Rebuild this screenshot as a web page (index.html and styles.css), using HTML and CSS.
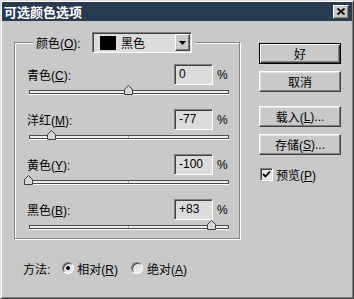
FILE: index.html
```html
<!DOCTYPE html>
<html lang="zh-CN">
<head>
<meta charset="utf-8">
<title>可选颜色选项</title>
<link rel="stylesheet" href="styles.css">
</head>
<body>
<div class="window">
  <div class="titlebar">
    <span class="title">可选颜色选项</span>
    <span class="close"><svg width="8" height="7" viewBox="0 0 8 7"><path d="M0.5 0.5 L7.5 6.5 M7.5 0.5 L0.5 6.5" stroke="#000" stroke-width="1.7" fill="none"/></svg></span>
  </div>
  <div class="content">
    <div class="main">
      <div class="group">
        <div class="group-head">
          <span class="head-label">颜色(<u>O</u>):</span>
          <div class="select sunken">
            <span class="swatch"></span>
            <span class="select-text">黑色</span>
            <span class="select-btn"><svg width="7" height="4" viewBox="0 0 7 4"><polygon points="0,0 7,0 3.5,4" fill="#000"/></svg></span>
          </div>
        </div>
        <div class="rows">
          <div class="row">
            <div class="row-top"><span class="label">青色(<u>C</u>):</span><span class="input sunken">0</span><span class="pct">%</span></div>
            <div class="slider"><div class="track"><span class="tick"></span><span class="thumb" style="left:94px"><svg width="9" height="10" viewBox="0 0 9 10"><polygon points="0.5,9.5 0.5,4.5 4.5,0.5 8.5,4.5 8.5,9.5" fill="#d6d6d6" stroke="#3c3c3c" stroke-width="1"/></svg></span></div></div>
          </div>
          <div class="row">
            <div class="row-top"><span class="label">洋红(<u>M</u>):</span><span class="input sunken">-77</span><span class="pct">%</span></div>
            <div class="slider"><div class="track"><span class="tick"></span><span class="thumb" style="left:17px"><svg width="9" height="10" viewBox="0 0 9 10"><polygon points="0.5,9.5 0.5,4.5 4.5,0.5 8.5,4.5 8.5,9.5" fill="#d6d6d6" stroke="#3c3c3c" stroke-width="1"/></svg></span></div></div>
          </div>
          <div class="row">
            <div class="row-top"><span class="label">黄色(<u>Y</u>):</span><span class="input sunken">-100</span><span class="pct">%</span></div>
            <div class="slider"><div class="track"><span class="tick"></span><span class="thumb" style="left:-6px"><svg width="9" height="10" viewBox="0 0 9 10"><polygon points="0.5,9.5 0.5,4.5 4.5,0.5 8.5,4.5 8.5,9.5" fill="#d6d6d6" stroke="#3c3c3c" stroke-width="1"/></svg></span></div></div>
          </div>
          <div class="row">
            <div class="row-top"><span class="label">黑色(<u>B</u>):</span><span class="input sunken">+83</span><span class="pct">%</span></div>
            <div class="slider"><div class="track"><span class="tick"></span><span class="thumb" style="left:177px"><svg width="9" height="10" viewBox="0 0 9 10"><polygon points="0.5,9.5 0.5,4.5 4.5,0.5 8.5,4.5 8.5,9.5" fill="#d6d6d6" stroke="#3c3c3c" stroke-width="1"/></svg></span></div></div>
          </div>
        </div>
      </div>
      <div class="buttons">
        <div class="btn btn-default">好</div>
        <div class="btn raised gap-s">取消</div>
        <div class="btn raised gap-l">载入(<u>L</u>)...</div>
        <div class="btn raised gap-s">存储(<u>S</u>)...</div>
        <div class="check-row">
          <span class="checkbox sunken"><svg width="9" height="9" viewBox="0 0 9 9"><path d="M1 4 L3.5 6.5 L8 1.5" stroke="#000" stroke-width="1.8" fill="none"/></svg></span>
          <span class="check-label">预览(<u>P</u>)</span>
        </div>
      </div>
    </div>
    <div class="method">
      <span class="method-label">方法:</span>
      <span class="radio radio-first checked"><span class="dot"></span></span>
      <span class="radio-label">相对(<u>R</u>)</span>
      <span class="radio radio-second"></span>
      <span class="radio-label radio-label-second">绝对(<u>A</u>)</span>
    </div>
  </div>
</div>
</body>
</html>
```
FILE: styles.css
```css
html, body {
  margin: 0;
  padding: 0;
  background: #c9c9c9;
}
body {
  font-family: "Liberation Sans", "Noto Sans CJK SC", sans-serif;
  font-size: 12px;
  color: #000;
}
u {
  text-decoration: underline;
  text-underline-offset: 1px;
}
.window {
  width: 354px;
  height: 299px;
  box-sizing: border-box;
  border: 1px solid;
  border-color: #dfdfdf #404040 #404040 #dfdfdf;
  box-shadow: inset 1px 1px #ffffff, inset -1px -1px #808080;
  padding: 1px;
  background: #c9c9c9;
  display: flex;
  flex-direction: column;
}
.titlebar {
  height: 19px;
  flex: none;
  background: #283c51;
  display: flex;
  align-items: center;
  padding: 0 3px 0 2px;
}
.title {
  flex: 1;
  color: #fff;
  font-family: "Noto Sans CJK SC", sans-serif;
  font-weight: bold;
  font-size: 13px;
  line-height: 19px;
}
.close {
  width: 16px;
  height: 14px;
  box-sizing: border-box;
  background: #c9c9c9;
  border: 1px solid;
  border-color: #fff #404040 #404040 #fff;
  box-shadow: inset -1px -1px #808080;
  display: flex;
  align-items: center;
  justify-content: center;
}
.close svg { display: block; }
.content {
  flex: 1;
  display: flex;
  flex-direction: column;
}
.main {
  display: flex;
  align-items: flex-start;
}
.sunken {
  border: 1px solid;
  border-color: #808080 #ffffff #ffffff #808080;
  box-shadow: inset 1px 1px #404040, inset -1px -1px #dfdfdf;
}
.raised {
  border: 1px solid;
  border-color: #ffffff #404040 #404040 #ffffff;
  box-shadow: inset -1px -1px #808080, inset 1px 1px #e4e4e4;
}
.group {
  margin: 21px 0 0 12px;
  width: 226px;
  height: 197px;
  box-sizing: border-box;
  border: 1px solid #858585;
  box-shadow: inset 1px 1px #ffffff, 1px 1px #ffffff;
  display: flex;
  flex-direction: column;
}
.group-head {
  align-self: flex-start;
  display: flex;
  align-items: center;
  height: 21px;
  margin: -11px 0 0 18px;
  padding: 0 3px;
  background: #c9c9c9;
}
.head-label {
  width: 56px;
  white-space: nowrap;
}
.select {
  width: 100px;
  height: 21px;
  box-sizing: border-box;
  background: #dcdcdc;
  display: flex;
  align-items: center;
  padding: 1px 1px 1px 7px;
}
.swatch {
  width: 16px;
  height: 14px;
  background: #000;
  flex: none;
}
.select-text {
  margin-left: 5px;
  flex: 1;
}
.select-btn {
  width: 15px;
  height: 17px;
  box-sizing: border-box;
  background: #c9c9c9;
  border: 1px solid;
  border-color: #ffffff #404040 #404040 #ffffff;
  box-shadow: inset -1px -1px #808080;
  display: flex;
  align-items: center;
  justify-content: center;
}
.select-btn svg { display: block; }
.rows {
  margin-top: 11px;
  padding: 0 10px 0 12px;
  display: flex;
  flex-direction: column;
  gap: 7px;
}
.row-top {
  display: flex;
  align-items: center;
  height: 21px;
}
.label {
  flex: 1;
  white-space: nowrap;
}
.input {
  width: 39px;
  height: 21px;
  box-sizing: border-box;
  background: #dcdcdc;
  padding-left: 4px;
  line-height: 19px;
}
.pct {
  width: 12px;
  margin-left: 4px;
}
.slider {
  margin: 4px 0 0 2px;
  height: 12px;
}
.track {
  position: relative;
  margin-top: 5px;
  height: 4px;
  box-sizing: border-box;
  border: 1px solid #4a4a4a;
  background: #eeeeee;
  box-shadow: 0 1px #ffffff;
}
.tick {
  position: absolute;
  left: 98px;
  top: 0;
  width: 1px;
  height: 2px;
  background: #a8a8a8;
}
.thumb {
  position: absolute;
  top: -6px;
  width: 9px;
  height: 10px;
}
.thumb svg { display: block; }
.buttons {
  margin: 22px 0 0 19px;
  display: flex;
  flex-direction: column;
}
.btn {
  width: 82px;
  height: 21px;
  box-sizing: border-box;
  display: flex;
  align-items: center;
  justify-content: center;
  white-space: nowrap;
}
.btn-default {
  border: 1px solid #000;
  box-shadow: inset 1px 1px #ffffff, inset -1px -1px #404040, inset -2px -2px #808080;
}
.gap-s { margin-top: 7px; }
.gap-l { margin-top: 14px; }
.check-row {
  margin-top: 13px;
  display: flex;
  align-items: center;
  height: 13px;
}
.checkbox {
  width: 13px;
  height: 13px;
  box-sizing: border-box;
  margin-left: 1px;
  background: #e6e6e6;
  display: flex;
  align-items: center;
  justify-content: center;
}
.checkbox svg { display: block; }
.check-label {
  margin-left: 3px;
}
.method {
  margin-top: 21px;
  padding-left: 21px;
  height: 16px;
  display: flex;
  align-items: center;
}
.radio {
  width: 12px;
  height: 12px;
  box-sizing: border-box;
  border-radius: 50%;
  border: 1px solid;
  border-color: #808080 #ffffff #ffffff #808080;
  box-shadow: inset 1px 1px #404040;
  background: #e6e6e6;
  display: flex;
  align-items: center;
  justify-content: center;
  flex: none;
}
.radio-first { margin-left: 12px; }
.radio-second { margin-left: 13px; }
.dot {
  width: 4px;
  height: 4px;
  border-radius: 50%;
  background: #000;
}
.radio-label { margin-left: 3px; }
.radio-label-second { margin-left: 4px; }
```
